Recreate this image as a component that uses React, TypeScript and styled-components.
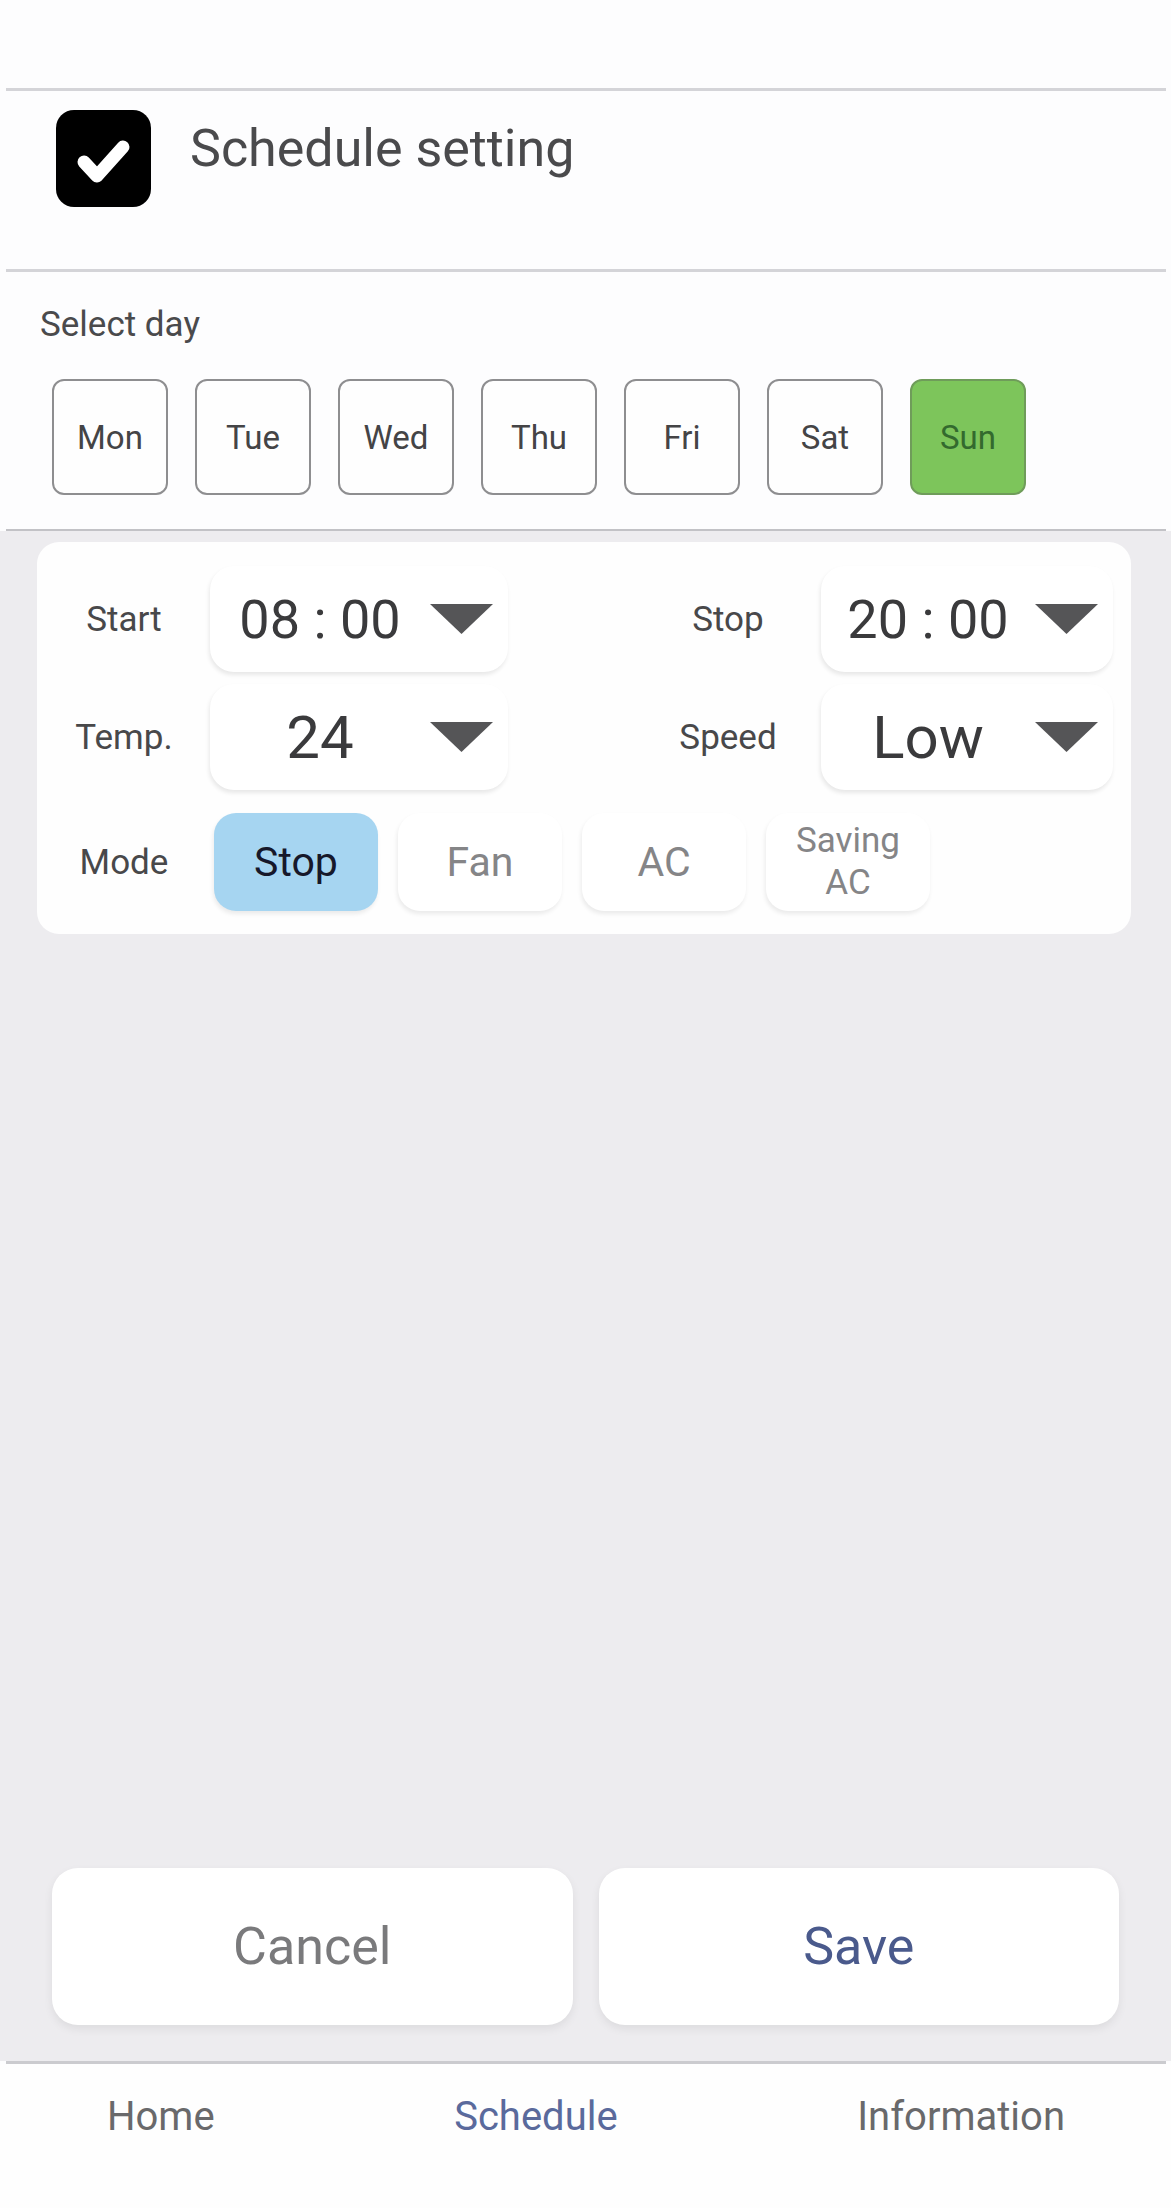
import { useState } from "react";
import styled, { createGlobalStyle } from "styled-components";

const DAYS = ["Mon", "Tue", "Wed", "Thu", "Fri", "Sat", "Sun"];
const MODES = [
  { id: "stop", label: "Stop" },
  { id: "fan", label: "Fan" },
  { id: "ac", label: "AC" },
  { id: "saving", label: "Saving\nAC" },
];

const GlobalStyle = createGlobalStyle`
  html, body {
    margin: 0;
    padding: 0;
    background: #fdfdfe;
    font-family: Roboto, "Noto Sans", "Liberation Sans", sans-serif;
  }
  * {
    box-sizing: border-box;
  }
`;

const Caret = () => (
  <CaretIcon viewBox="0 0 63 30" aria-hidden="true">
    <polygon points="0,0 63,0 31.5,30" />
  </CaretIcon>
);

const App = () => {
  const [enabled, setEnabled] = useState(true);
  const [day, setDay] = useState("Sun");
  const [mode, setMode] = useState("stop");

  return (
    <>
      <GlobalStyle />
      <Page>
        <TopSpace />
        <Divider $thick={3} />
        <Header>
          <CheckBox type="button" onClick={() => setEnabled(!enabled)}>
            {enabled && (
              <svg width="95" height="97" viewBox="0 0 95 97">
                <polyline
                  points="28,52 41,66 67,37"
                  fill="none"
                  stroke="#fff"
                  strokeWidth="13"
                  strokeLinecap="round"
                  strokeLinejoin="round"
                />
              </svg>
            )}
          </CheckBox>
          <Title>Schedule setting</Title>
        </Header>
        <Divider $thick={3} />
        <DaySection>
          <SectionLabel>Select day</SectionLabel>
          <DayRow>
            {DAYS.map((d) => (
              <DayButton
                key={d}
                type="button"
                $active={d === day}
                onClick={() => setDay(d)}
              >
                {d}
              </DayButton>
            ))}
          </DayRow>
        </DaySection>
        <Divider $thick={2} $color="#c2c2c6" />
        <Main>
          <SettingsCard>
            <Row>
              <FieldLabel>Start</FieldLabel>
              <Select $width={298} $offset={11}>
                <Value $size={54}>08 : 00</Value>
                <Caret />
              </Select>
              <RightGroup>
                <FieldLabel>Stop</FieldLabel>
                <Select $width={292} $offset={18}>
                  <Value $size={54}>20 : 00</Value>
                  <Caret />
                </Select>
              </RightGroup>
            </Row>
            <Row>
              <FieldLabel>Temp.</FieldLabel>
              <Select $width={298} $offset={11}>
                <Value $size={60}>24</Value>
                <Caret />
              </Select>
              <RightGroup>
                <FieldLabel>Speed</FieldLabel>
                <Select $width={292} $offset={18}>
                  <Value $size={60}>Low</Value>
                  <Caret />
                </Select>
              </RightGroup>
            </Row>
            <ModeRow>
              <FieldLabel>Mode</FieldLabel>
              <ModeList>
                {MODES.map((m) => (
                  <ModeButton
                    key={m.id}
                    type="button"
                    $active={m.id === mode}
                    $small={m.id === "saving"}
                    onClick={() => setMode(m.id)}
                  >
                    {m.label}
                  </ModeButton>
                ))}
              </ModeList>
            </ModeRow>
          </SettingsCard>
          <Actions>
            <ActionButton type="button">Cancel</ActionButton>
            <ActionButton type="button" $primary>
              Save
            </ActionButton>
          </Actions>
        </Main>
        <Divider $thick={3} $color="#cbcbcf" />
        <NavBar>
          <NavItem>Home</NavItem>
          <NavItem $active>Schedule</NavItem>
          <NavItem>Information</NavItem>
        </NavBar>
      </Page>
    </>
  );
};

const Page = styled.div`
  width: 1171px;
  height: 2208px;
  display: flex;
  flex-direction: column;
  background: #fdfdfe;
  overflow: hidden;
`;

const TopSpace = styled.div`
  height: 88px;
  flex-shrink: 0;
`;

const Divider = styled.div<{ $thick: number; $color?: string }>`
  height: ${(p) => p.$thick}px;
  margin: 0 5px 0 6px;
  background: ${(p) => p.$color || "#d4d4d8"};
  flex-shrink: 0;
`;

const Header = styled.div`
  height: 178px;
  flex-shrink: 0;
  display: flex;
  align-items: flex-start;
  padding: 19px 0 0 56px;
`;

const CheckBox = styled.button`
  width: 95px;
  height: 97px;
  padding: 0;
  border: none;
  border-radius: 18px;
  background: #000;
  cursor: pointer;
  display: flex;
  svg {
    display: block;
  }
`;

const Title = styled.h1`
  margin: 13px 0 0 39px;
  font-size: 52px;
  line-height: 1;
  font-weight: 400;
  color: #4a4a4c;
`;

const DaySection = styled.div`
  height: 257px;
  flex-shrink: 0;
  padding: 35px 0 0 40px;
`;

const SectionLabel = styled.div`
  font-size: 35px;
  line-height: 1;
  color: #4a4a4c;
`;

const DayRow = styled.div`
  display: flex;
  gap: 27px;
  margin: 37px 0 0 12px;
`;

const DayButton = styled.button<{ $active?: boolean }>`
  width: 116px;
  height: 116px;
  padding: 0;
  border-radius: 12px;
  border: 2px solid ${(p) => (p.$active ? "#6f9c5a" : "#8e8e90")};
  background: ${(p) => (p.$active ? "#7dc55b" : "#fefefe")};
  color: ${(p) => (p.$active ? "#336a2e" : "#444446")};
  font-family: inherit;
  font-size: 33px;
  cursor: pointer;
`;

const Main = styled.div`
  flex: 1;
  display: flex;
  flex-direction: column;
  background: #edecef;
  padding: 11px 0 36px;
`;

const SettingsCard = styled.div`
  margin: 0 40px 0 37px;
  padding: 24px 18px 23px 12px;
  background: #fefefe;
  border-radius: 22px;
  display: flex;
  flex-direction: column;
  gap: 12px;
`;

const Row = styled.div`
  display: flex;
  align-items: center;
`;

const RightGroup = styled.div`
  display: flex;
  align-items: center;
  margin-left: auto;
`;

const FieldLabel = styled.span`
  width: 150px;
  flex-shrink: 0;
  text-align: center;
  font-size: 35px;
  color: #48484a;
`;

const Select = styled.div<{ $width: number; $offset: number }>`
  width: ${(p) => p.$width}px;
  height: 106px;
  margin-left: ${(p) => p.$offset}px;
  display: flex;
  align-items: center;
  padding-right: 15px;
  background: #fff;
  border-radius: 24px;
  box-shadow: -1px 3px 4px rgba(0, 0, 0, 0.09);
  cursor: pointer;
`;

const Value = styled.span<{ $size: number }>`
  flex: 1;
  text-align: center;
  font-size: ${(p) => p.$size}px;
  color: #3a3a3c;
`;

const CaretIcon = styled.svg`
  width: 63px;
  height: 30px;
  flex-shrink: 0;
  fill: #555557;
`;

const ModeRow = styled.div`
  display: flex;
  align-items: center;
  margin-top: 11px;
`;

const ModeList = styled.div`
  display: flex;
  gap: 20px;
  margin-left: 15px;
`;

const ModeButton = styled.button<{ $active?: boolean; $small?: boolean }>`
  width: 164px;
  height: 98px;
  padding: 0;
  border: none;
  border-radius: 22px;
  background: ${(p) => (p.$active ? "#a6d5f1" : "#fff")};
  box-shadow: -1px 3px 4px rgba(0, 0, 0, 0.08);
  color: ${(p) => (p.$active ? "#16182a" : "#858587")};
  font-family: inherit;
  font-size: ${(p) => (p.$small ? 35 : 41)}px;
  line-height: ${(p) => (p.$small ? 1.2 : 1)};
  white-space: pre-line;
  cursor: pointer;
`;

const Actions = styled.div`
  margin-top: auto;
  display: flex;
  gap: 26px;
  padding: 0 52px;
`;

const ActionButton = styled.button<{ $primary?: boolean }>`
  flex: 1;
  height: 157px;
  border: none;
  border-radius: 26px;
  background: #fff;
  box-shadow: 0 4px 10px rgba(0, 0, 0, 0.07);
  color: ${(p) => (p.$primary ? "#4a5a8c" : "#7a7a7c")};
  font-family: inherit;
  font-size: 52px;
  cursor: pointer;
`;

const NavBar = styled.nav`
  height: 144px;
  flex-shrink: 0;
  display: flex;
  justify-content: space-between;
  align-items: flex-start;
  padding: 33px 106px 0 107px;
  background: #fefefe;
`;

const NavItem = styled.span<{ $active?: boolean }>`
  font-size: 40px;
  line-height: 1;
  color: ${(p) => (p.$active ? "#5a6a9c" : "#69696b")};
`;

export default App;
